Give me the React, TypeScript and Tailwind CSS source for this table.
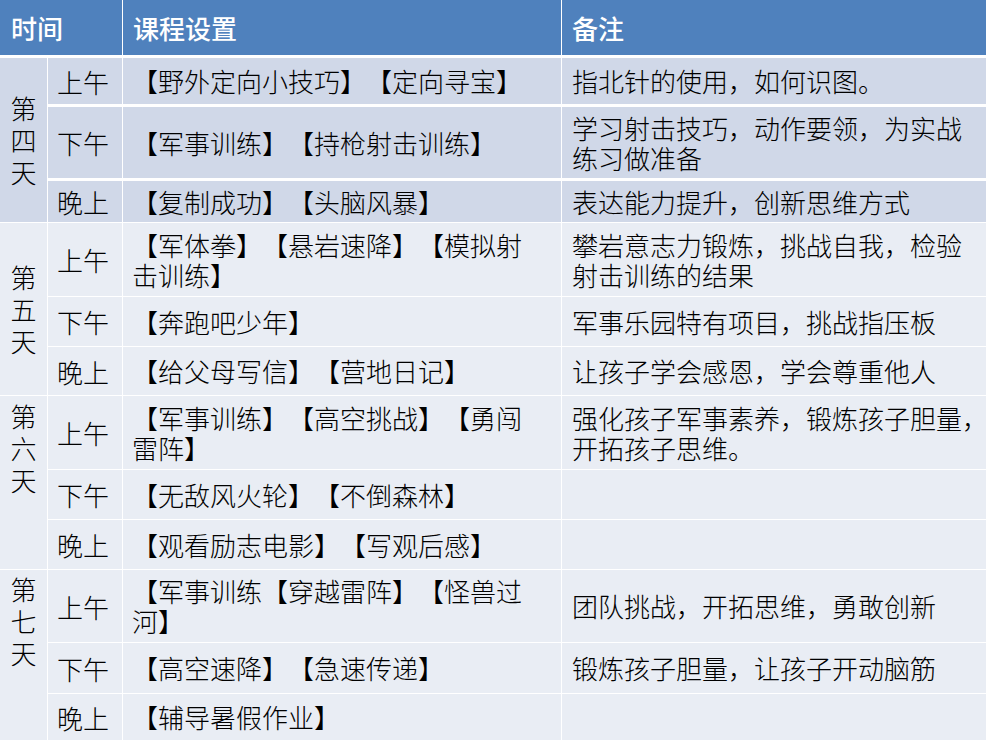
type Slot = {
  time: string;
  course: string[];
  note: string[];
  h: string;
};

type Day = {
  label: string;
  band: string;
  gap: string;
  align: string;
  slots: Slot[];
};

const days: Day[] = [
  {
    label: "第四天",
    band: "bg-[#d0d8e8]",
    gap: "gap-[3px]",
    align: "justify-center",
    slots: [
      { time: "上午", course: ["【野外定向小技巧】【定向寻宝】"], note: ["指北针的使用，如何识图。"], h: "h-[46px]" },
      { time: "下午", course: ["【军事训练】【持枪射击训练】"], note: ["学习射击技巧，动作要领，为实战", "练习做准备"], h: "h-[71px]" },
      { time: "晚上", course: ["【复制成功】【头脑风暴】"], note: ["表达能力提升，创新思维方式"], h: "h-[41px]" },
    ],
  },
  {
    label: "第五天",
    band: "bg-[#e9edf4]",
    gap: "gap-px",
    align: "justify-center",
    slots: [
      { time: "上午", course: ["【军体拳】【悬岩速降】【模拟射", "击训练】"], note: ["攀岩意志力锻炼，挑战自我，检验", "射击训练的结果"], h: "h-[73px]" },
      { time: "下午", course: ["【奔跑吧少年】"], note: ["军事乐园特有项目，挑战指压板"], h: "h-[49px]" },
      { time: "晚上", course: ["【给父母写信】【营地日记】"], note: ["让孩子学会感恩，学会尊重他人"], h: "h-[48px]" },
    ],
  },
  {
    label: "第六天",
    band: "bg-[#e9edf4]",
    gap: "gap-px",
    align: "justify-start pt-[4px]",
    slots: [
      { time: "上午", course: ["【军事训练】【高空挑战】【勇闯", "雷阵】"], note: ["强化孩子军事素养，锻炼孩子胆量，", "开拓孩子思维。"], h: "h-[73px]" },
      { time: "下午", course: ["【无敌风火轮】【不倒森林】"], note: [], h: "h-[49px]" },
      { time: "晚上", course: ["【观看励志电影】【写观后感】"], note: [], h: "h-[49px]" },
    ],
  },
  {
    label: "第七天",
    band: "bg-[#e9edf4]",
    gap: "gap-px",
    align: "justify-start pt-[3px]",
    slots: [
      { time: "上午", course: ["【军事训练【穿越雷阵】【怪兽过", "河】"], note: ["团队挑战，开拓思维，勇敢创新"], h: "h-[72px]" },
      { time: "下午", course: ["【高空速降】【急速传递】"], note: ["锻炼孩子胆量，让孩子开动脑筋"], h: "h-[50px]" },
      { time: "晚上", course: ["【辅导暑假作业】"], note: [], h: "h-[46px]" },
    ],
  },
];

function Lines({ lines }: { lines: string[] }) {
  return (
    <div className="flex flex-col leading-[30px] whitespace-nowrap">
      {lines.map((l, i) => (
        <span key={i}>{l}</span>
      ))}
    </div>
  );
}

function DayBlock({ day }: { day: Day }) {
  return (
    <div className="flex gap-px">
      <div className={`w-[47px] shrink-0 flex flex-col items-center leading-[32px] ${day.band} ${day.align}`}>
        {day.label.split("").map((c, i) => (
          <span key={i}>{c}</span>
        ))}
      </div>
      <div className={`flex-1 flex flex-col ${day.gap}`}>
        {day.slots.map((s, i) => (
          <div key={i} className={`flex gap-px ${s.h}`}>
            <div className={`w-[74px] shrink-0 flex items-center pl-[9px] ${day.band}`}>{s.time}</div>
            <div className={`w-[438px] shrink-0 flex items-center pl-[9px] ${day.band}`}>
              <Lines lines={s.course} />
            </div>
            <div className={`flex-1 flex items-center pl-[10px] ${day.band}`}>
              <Lines lines={s.note} />
            </div>
          </div>
        ))}
      </div>
    </div>
  );
}

export default function App() {
  return (
    <div
      className="w-[986px] h-[740px] overflow-hidden bg-white flex flex-col text-[26px] font-light text-black [text-spacing-trim:space-all]"
      style={{ fontFamily: '"Noto Sans CJK SC", "Noto Sans", sans-serif' }}
    >
      {/* header */}
      <div className="h-[55px] shrink-0 flex gap-px text-white font-medium">
        <div className="w-[122px] shrink-0 bg-[#4f81bd] flex items-center pl-[11px]">时间</div>
        <div className="w-[438px] shrink-0 bg-[#4f81bd] flex items-center pl-[10px]">课程设置</div>
        <div className="flex-1 bg-[#4f81bd] flex items-center pl-[10px]">备注</div>
      </div>

      <div className="mt-[3px] flex flex-col gap-px">
        {days.map((d) => (
          <DayBlock key={d.label} day={d} />
        ))}
      </div>
    </div>
  );
}
